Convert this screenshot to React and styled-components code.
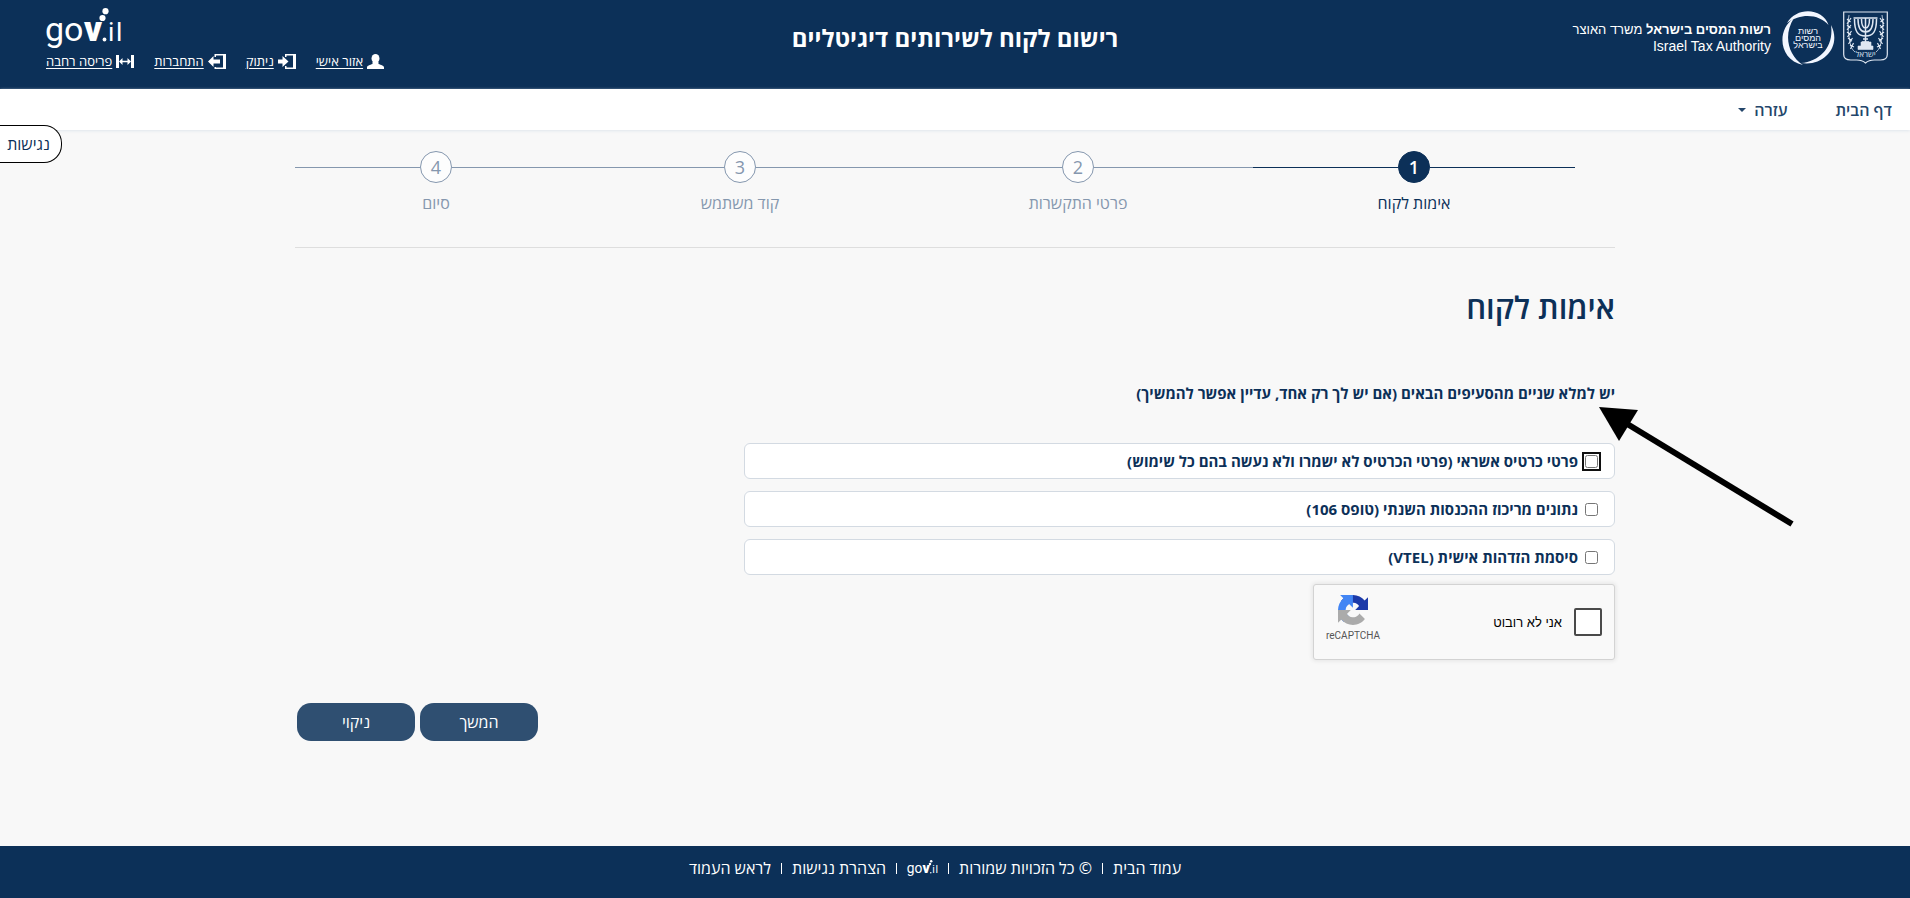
import React from 'react';
import styled, { createGlobalStyle } from 'styled-components';

const GlobalStyle = createGlobalStyle`
  * {
    box-sizing: border-box;
  }

  body {
    margin: 0;
    background-color: #f8f8f8;
    color: #0c3058;
    font-family: 'Open Sans', 'Liberation Sans', sans-serif;
    font-size: 16px;
  }
`;

const Page = styled.div`
  display: flex;
  flex-direction: column;
  min-height: 100vh;
`;

const Header = styled.header`
  display: grid;
  grid-template-columns: 1fr auto 1fr;
  height: 89px;
  padding: 8px 22px 0;
  background-color: #0c3058;
  color: #ffffff;
`;

const Brand = styled.div`
  display: flex;
  align-items: flex-start;
  gap: 8px;
  padding-top: 3px;
`;

const BrandText = styled.div`
  padding: 11px 3px 0 0;
  font-family: 'Liberation Sans', sans-serif;
  font-size: 14px;
  line-height: 16px;
`;

const BrandLine = styled.div`
  font-size: 13px;
`;

const BrandEnglish = styled.div`
  direction: ltr;
  text-align: right;
`;

const SiteTitle = styled.h1`
  margin: 0;
  padding-top: 14px;
  font-size: 24px;
  font-weight: 700;
  line-height: 32px;
`;

const HeaderEnd = styled.div`
  display: flex;
  flex-direction: column;
  align-items: flex-end;
  gap: 1px;
  padding-left: 24px;
`;

const UserLinks = styled.nav`
  display: flex;
  gap: 20px;
`;

const UserLink = styled.a`
  display: flex;
  align-items: center;
  gap: 4px;
  color: #ffffff;
  font-size: 13px;
  line-height: 20px;
  text-decoration: none;

  span {
    text-decoration: underline;
    text-underline-offset: 2px;
  }
`;

const NavBar = styled.nav`
  display: flex;
  gap: 48px;
  height: 41px;
  padding: 0 18px;
  align-items: center;
  background-color: #ffffff;
  box-shadow: 0 1px 3px #dfe6ec;
`;

const NavLink = styled.a`
  display: flex;
  align-items: center;
  gap: 8px;
  color: #24466b;
  font-size: 16px;
  font-weight: 600;
  text-decoration: none;
`;

const Caret = styled.span`
  border-top: 4px solid #24466b;
  border-right: 4px solid transparent;
  border-left: 4px solid transparent;
`;

const AccessibilityButton = styled.button`
  position: absolute;
  top: 125px;
  left: 0;
  width: 62px;
  height: 38px;
  padding: 0 4px 0 0;
  border: 1px solid #000000;
  border-left: 0;
  border-radius: 0 18px 18px 0;
  background-color: #ffffff;
  color: #0c3058;
  font-family: inherit;
  font-size: 16px;
`;

const Main = styled.main`
  flex: 1;
  width: 100%;
  max-width: 1320px;
  margin: 0 auto;
`;

const Steps = styled.ol`
  display: flex;
  margin: 0;
  padding: 21px 40px 32px 0;
  border-bottom: 1px solid #dedede;
  list-style: none;
`;

const Step = styled.li`
  display: flex;
  flex: ${(props) => props.$weight};
  flex-direction: column;
  align-items: center;
  gap: 8px;
  color: ${(props) => (props.$active ? '#0c3058' : '#8597ae')};
  font-size: 16px;
  line-height: 24px;
`;

const StepTrack = styled.div`
  display: flex;
  align-items: center;
  width: 100%;

  &::before,
  &::after {
    content: '';
    flex: 1;
    height: 1px;
    background-color: ${(props) => (props.$active ? '#0c3058' : '#8597ae')};
  }
`;

const StepNumber = styled.span`
  width: 32px;
  height: 32px;
  border: 1px solid ${(props) => (props.$active ? '#0c3058' : '#8597ae')};
  border-radius: 50%;
  background-color: ${(props) => (props.$active ? '#0c3058' : '#fdfdfd')};
  color: ${(props) => (props.$active ? '#ffffff' : '#8597ae')};
  font-size: 18px;
  font-weight: ${(props) => (props.$active ? 600 : 400)};
  line-height: 30px;
  text-align: center;
`;

const Title = styled.h2`
  margin: 0;
  padding-top: 35px;
  font-size: 31px;
  font-weight: 600;
  line-height: 48px;
`;

const Instruction = styled.p`
  position: relative;
  margin: 50px 0 38px;
  font-size: 15px;
  font-weight: 700;
  line-height: 24px;
`;

const Arrow = styled.svg`
  position: absolute;
  top: 26px;
  right: -180px;
`;

const Options = styled.div`
  display: flex;
  flex-direction: column;
  gap: 12px;
  width: 66%;
`;

const Option = styled.label`
  display: flex;
  align-items: center;
  gap: 7px;
  height: 36px;
  padding: 0 16px;
  border: 1px solid #d3dae2;
  border-radius: 6px;
  background-color: #ffffff;
  font-size: 15px;
  font-weight: 700;
`;

const OptionCheck = styled.input`
  width: 13px;
  height: 13px;
  margin: 0;

  &:focus {
    outline: 2px solid #101010;
    outline-offset: 1px;
    border-radius: 2px;
  }
`;

const Captcha = styled.div`
  display: flex;
  align-items: center;
  justify-content: space-between;
  width: 302px;
  height: 76px;
  margin-top: 9px;
  padding: 0 12px;
  border: 1px solid #d3d3d3;
  border-radius: 3px;
  background-color: #f9f9f9;
  box-shadow: 0 0 4px 1px rgba(0, 0, 0, 0.08);
  font-family: 'Liberation Sans', sans-serif;
`;

const CaptchaLabel = styled.label`
  display: flex;
  align-items: center;
  gap: 12px;
  color: #000000;
  font-size: 13px;
`;

const CaptchaCheck = styled.input`
  appearance: none;
  width: 28px;
  height: 28px;
  margin: 0;
  border: 2px solid #4a4a4a;
  border-radius: 2px;
  background-color: #ffffff;
`;

const CaptchaLogo = styled.div`
  display: flex;
  flex-direction: column;
  align-items: center;
  gap: 4px;
  padding-bottom: 6px;
  color: #555555;
  font-family: Roboto, sans-serif;
  font-size: 10px;
  line-height: 14px;
`;

const Actions = styled.div`
  display: flex;
  justify-content: flex-end;
  gap: 5px;
  padding: 43px 0 60px 2px;
`;

const ActionButton = styled.button`
  width: 118px;
  height: 38px;
  border: 0;
  border-radius: 14px;
  background-color: #2f4f71;
  color: #ffffff;
  font-family: inherit;
  font-size: 16px;
  font-weight: 500;
`;

const Footer = styled.footer`
  display: flex;
  justify-content: center;
  height: 52px;
  padding: 10px 40px 0 0;
  background-color: #0c3058;
`;

const FooterLink = styled.a`
  display: flex;
  align-items: center;
  height: 24px;
  color: #ffffff;
  font-size: 16px;
  text-decoration: none;

  &:not(:last-child)::after {
    content: '';
    width: 1px;
    height: 11px;
    margin: 0 10px;
    background-color: #ffffff;
  }
`;

const LogoSvg = styled.svg`
  overflow: visible;
`;

const steps = [
  { label: 'אימות לקוח', weight: 322, active: true },
  { label: 'פרטי התקשרות', weight: 350 },
  { label: 'קוד משתמש', weight: 326 },
  { label: 'סיום', weight: 282 },
];

const options = [
  'פרטי כרטיס אשראי (פרטי הכרטיס לא ישמרו ולא נעשה בהם כל שימוש)',
  'נתונים מריכוז ההכנסות השנתי (טופס 106)',
  'סיסמת הזדהות אישית (VTEL)',
];

function GovLogo({ width, height }) {
  return (
    <LogoSvg width={width} height={height} viewBox="0 0 76 42" fill="#ffffff" direction="ltr" fontFamily="Roboto, sans-serif">
      <text x="-1" y="33" fontSize="34">go</text>
      <text x="38" y="33" fontSize="35" fontWeight="900">v</text>
      <circle cx="56.500" cy="10" r="3.100" />
      <circle cx="59.500" cy="3.200" r="3.100" />
      <circle cx="58.500" cy="31.500" r="1.900" />
      <text x="62" y="33" fontSize="26">i</text>
      <text x="70" y="33" fontSize="26">l</text>
    </LogoSvg>
  );
}

function UserIcon() {
  return (
    <svg width="17" height="15" viewBox="0 0 17 15" fill="#ffffff">
      <ellipse cx="8.500" cy="4.500" rx="4" ry="4.500" />
      <path d="M0 15v-1.500c0-2 3-2.500 5.500-3.500V8h6v2c2.500 1 5.500 1.500 5.500 3.500V15z" />
    </svg>
  );
}

function LogoutIcon() {
  return (
    <svg width="18" height="15" viewBox="0 0 18 15" fill="#ffffff">
      <path d="M7 0h11v15H7v-3h1.500v1.500H15v-12H8.500V3H7zM0 5.500h4.500V2L10.500 7.500 4.500 13V9.500H0z" />
    </svg>
  );
}

function LoginIcon() {
  return (
    <svg width="18" height="15" viewBox="0 0 18 15" fill="#ffffff">
      <path d="M6.500 0H18v15H6.500v-2H8v.5h7v-12H8V3H6.500zM0 7.500 5.500 2v3.500H12v4H5.500V13z" />
    </svg>
  );
}

function WideIcon() {
  return (
    <svg width="18" height="13" viewBox="0 0 18 13" fill="#ffffff">
      <path d="M0 0h3v13H0zM15 0h3v13h-3zM3 6.500 6.500 3v2.700h5V3L15 6.500 11.500 10V7.300h-5V10z" />
    </svg>
  );
}

function StateEmblem() {
  return (
    <svg width="45" height="53" viewBox="0 0 45 53" fill="none" stroke="#dfe7f2">
      <path d="M.7 1h43.600v42.500c0 4-3 5.500-7 5.500h-6c-4.500 0-6.500 1-8.800 3-2.300-2-4.300-3-8.800-3h-6c-4 0-7-1.500-7-5.500z" strokeWidth="1.200" />
      <path d="M11.500 8c0 13 3.500 17 11 17s11-4 11-17M15 8c0 9 2.500 13 7.500 13S30 17 30 8M18.500 8c0 6 1 9 4 9s4-3 4-9M22.500 7v24" strokeWidth="1.500" />
      <path d="M10.500 7h24M20 28h5M19 31h7" strokeWidth="1.600" />
      <path d="M18 31h10v4H18zM15 35h15v3.500H15z" fill="#dfe7f2" strokeWidth=".6" />
      <path d="M6 4c-1.500 8-1 15 0 21 1 8 2 13 6 16M39 4c1.500 8 1 15 0 21-1 8-2 13-6 16" strokeWidth=".8" />
      <path d="M4 8l3.500 3M8 7l-4 6M4 14l3.500 3M8 14l-4 5M4 21l4 3M8.500 20l-4 6M5 27l4 3M9.500 27l-4 6M7 34l4 2M10.500 32l-3 6M41 8l-3.500 3M37 7l4 6M41 14l-3.500 3M37 14l4 5M41 21l-4 3M36.500 20l4 6M40 27l-4 3M35.500 27l4 6M38 34l-4 2M34.500 32l3 6" strokeWidth="1.200" />
      <text x="22.500" y="46" fill="#dfe7f2" stroke="none" fontSize="8" textAnchor="middle">ישראל</text>
    </svg>
  );
}

function TaxLogo() {
  return (
    <svg width="53" height="54" viewBox="0 0 53 54" fill="#f2f6ff">
      <path d="M5 12C15-5 41-3 46.500 14 38 4 20 1 5 12z" />
      <path d="M49 14C60 35 42 56 19 52 39 50 52 35 49 14z" />
      <path d="M12 7C-6 19-3 49 21 54 6 44 1 24 12 7z" />
      <g fontSize="9" textAnchor="middle" fontFamily="Liberation Sans, sans-serif">
        <text x="26" y="23">רשות</text>
        <text x="26" y="30">המסים</text>
        <text x="26" y="37">בישראל</text>
      </g>
    </svg>
  );
}

function RecaptchaLogo() {
  return (
    <svg width="30" height="30" viewBox="0 0 64 64">
      <path fill="#1c3aa9" d="M64 31.955l-.033-1.370V4.687l-7.160 7.160C50.948 4.674 42.033.093 32.050.093c-10.400 0-19.622 4.960-25.458 12.640l11.736 11.860a15.550 15.550 0 0 1 4.754-5.334c2.050-1.600 4.952-2.906 8.968-2.906.485 0 .860.057 1.135.163 4.976.393 9.288 3.140 11.828 7.124l-8.307 8.307L64 31.953" />
      <path fill="#4285f4" d="M31.862.094l-1.370.033H4.594l7.160 7.160C4.580 13.147 0 22.060 0 32.046c0 10.400 4.960 19.622 12.640 25.458L24.500 45.768a15.550 15.550 0 0 1-5.334-4.754c-1.600-2.050-2.906-4.952-2.906-8.968 0-.485.057-.860.163-1.135.393-4.976 3.140-9.288 7.124-11.828l8.307 8.307L31.860.095" />
      <path fill="#ababab" d="M.001 32.045l.033 1.370v25.898l7.160-7.160c5.860 7.173 14.774 11.754 24.760 11.754 10.400 0 19.622-4.960 25.458-12.640l-11.736-11.860a15.550 15.550 0 0 1-4.754 5.334c-2.050 1.600-4.952 2.906-8.968 2.906-.485 0-.860-.057-1.135-.163-4.976-.393-9.288-3.140-11.828-7.124l8.307-8.307c-10.522.040-22.400.066-27.295-.005" />
    </svg>
  );
}

function App() {
  return (
    <Page dir="rtl">
      <GlobalStyle />
      <Header>
        <Brand>
          <StateEmblem />
          <TaxLogo />
          <BrandText>
            <BrandLine><b>רשות המסים בישראל</b> משרד האוצר</BrandLine>
            <BrandEnglish>Israel Tax Authority</BrandEnglish>
          </BrandText>
        </Brand>
        <SiteTitle>רישום לקוח לשירותים דיגיטליים</SiteTitle>
        <HeaderEnd>
          <GovLogo width={76} height={42} />
          <UserLinks>
            <UserLink href="#"><UserIcon /><span>אזור אישי</span></UserLink>
            <UserLink href="#"><LogoutIcon /><span>ניתוק</span></UserLink>
            <UserLink href="#"><LoginIcon /><span>התחברות</span></UserLink>
            <UserLink href="#"><WideIcon /><span>פריסה רחבה</span></UserLink>
          </UserLinks>
        </HeaderEnd>
      </Header>

      <NavBar>
        <NavLink href="#">דף הבית</NavLink>
        <NavLink href="#">עזרה<Caret /></NavLink>
      </NavBar>

      <AccessibilityButton type="button">נגישות</AccessibilityButton>

      <Main>
        <Steps>
          {steps.map((step, index) => (
            <Step key={step.label} $weight={step.weight} $active={step.active}>
              <StepTrack $active={step.active}>
                <StepNumber $active={step.active}>{index + 1}</StepNumber>
              </StepTrack>
              {step.label}
            </Step>
          ))}
        </Steps>

        <Title>אימות לקוח</Title>
        <Instruction>
          יש למלא שניים מהסעיפים הבאים (אם יש לך רק אחד, עדיין אפשר להמשיך)
          <Arrow width="196" height="120" viewBox="0 0 196 120">
            <path d="M25 15 193 117" stroke="#000000" strokeWidth="6" />
            <path d="M0 0 39 3 20 34z" />
          </Arrow>
        </Instruction>

        <Options>
          {options.map((option, index) => (
            <Option key={option}>
              <OptionCheck type="checkbox" autoFocus={index === 0} />
              {option}
            </Option>
          ))}
        </Options>

        <Captcha>
          <CaptchaLabel>
            <CaptchaCheck type="checkbox" />
            אני לא רובוט
          </CaptchaLabel>
          <CaptchaLogo>
            <RecaptchaLogo />
            reCAPTCHA
          </CaptchaLogo>
        </Captcha>

        <Actions>
          <ActionButton type="button">המשך</ActionButton>
          <ActionButton type="button">ניקוי</ActionButton>
        </Actions>
      </Main>

      <Footer>
        <FooterLink href="#">עמוד הבית</FooterLink>
        <FooterLink href="#">© כל הזכויות שמורות</FooterLink>
        <FooterLink href="#" aria-label="gov.il"><GovLogo width={31} height={17} /></FooterLink>
        <FooterLink href="#">הצהרת נגישות</FooterLink>
        <FooterLink href="#">לראש העמוד</FooterLink>
      </Footer>
    </Page>
  );
}

export default App;
